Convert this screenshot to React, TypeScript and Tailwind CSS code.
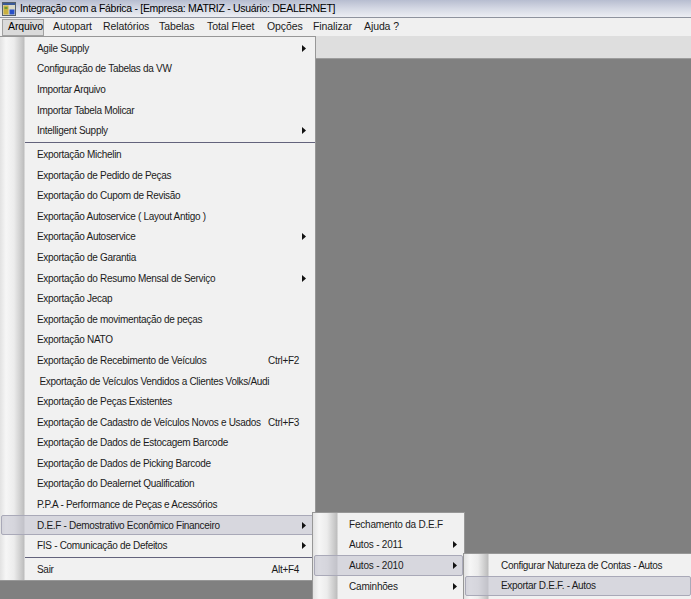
import React from 'react';

type Item = {
  label: string;
  shortcut?: string;
  sub?: boolean;
  active?: boolean;
  sep?: boolean;
};

const mainItems: Item[] = [
  { label: 'Agile Supply', sub: true },
  { label: 'Configuração de Tabelas da VW' },
  { label: 'Importar Arquivo' },
  { label: 'Importar Tabela Molicar' },
  { label: 'Intelligent Supply', sub: true },
  { label: '', sep: true },
  { label: 'Exportação Michelin' },
  { label: 'Exportação de Pedido de Peças' },
  { label: 'Exportação do Cupom de Revisão' },
  { label: 'Exportação Autoservice ( Layout Antigo )' },
  { label: 'Exportação Autoservice', sub: true },
  { label: 'Exportação de Garantia' },
  { label: 'Exportação do Resumo Mensal de Serviço', sub: true },
  { label: 'Exportação Jecap' },
  { label: 'Exportação de movimentação de peças' },
  { label: 'Exportação NATO' },
  { label: 'Exportação de Recebimento de Veículos', shortcut: 'Ctrl+F2' },
  { label: ' Exportação de Veículos Vendidos a Clientes Volks/Audi' },
  { label: 'Exportação de Peças Existentes' },
  { label: 'Exportação de Cadastro de Veículos Novos e Usados', shortcut: 'Ctrl+F3' },
  { label: 'Exportação de Dados de Estocagem Barcode' },
  { label: 'Exportação de Dados de Picking Barcode' },
  { label: 'Exportação do Dealernet Qualification' },
  { label: 'P.P.A - Performance de Peças e Acessórios' },
  { label: 'D.E.F - Demostrativo Econômico Financeiro', sub: true, active: true },
  { label: 'FIS - Comunicação de Defeitos', sub: true },
  { label: '', sep: true },
  { label: 'Sair', shortcut: 'Alt+F4' },
];

const defItems: Item[] = [
  { label: 'Fechamento da D.E.F' },
  { label: 'Autos - 2011', sub: true },
  { label: 'Autos - 2010', sub: true, active: true },
  { label: 'Caminhões', sub: true },
];

const autosItems: Item[] = [
  { label: 'Configurar Natureza de Contas - Autos' },
  { label: 'Exportar D.E.F. - Autos', active: true },
];

const topMenu = [
  { label: 'Arquivo', w: 'w-[42px]' },
  { label: 'Autopart', w: 'w-[50px]' },
  { label: 'Relatórios', w: 'w-[56px]' },
  { label: 'Tabelas', w: 'w-[48px]' },
  { label: 'Total Fleet', w: 'w-[60px]' },
  { label: 'Opções', w: 'w-[46px]' },
  { label: 'Finalizar', w: 'w-[51px]' },
  { label: 'Ajuda ?', w: 'w-[44px]' },
];

const Arrow = () => (
  <svg width="4" height="7" viewBox="0 0 4 7" className="shrink-0">
    <polygon points="0,0 4,3.5 0,7" fill="#111" />
  </svg>
);

const AppIcon = () => (
  <svg width="14" height="14" viewBox="0 0 14 14">
    <rect x="0.5" y="0.5" width="13" height="13" fill="#d8d8c8" stroke="#55606a" />
    <rect x="1" y="1" width="12" height="2" fill="#3a5a9a" />
    <rect x="1.5" y="3.5" width="5" height="9" fill="#c8b040" />
    <rect x="2.5" y="5" width="3" height="2" fill="#6a9a30" />
    <rect x="7.5" y="7.5" width="5" height="5" fill="#2850c8" />
  </svg>
);

const MenuRow = ({ item, textPad, rightPad }: { item: Item; textPad: string; rightPad: string }) => {
  if (item.sep) {
    return (
      <div className="h-[3.5px] flex items-center pl-[25px]">
        <div className="h-px w-full bg-[#63637c]" />
      </div>
    );
  }
  return (
    <div
      className={`h-[20.58px] flex items-center ${textPad} ${rightPad} whitespace-pre ${
        item.active ? 'bg-[#c6c6d2]/60 border border-[#a9a9b8] rounded-[2px] mx-[1px]' : 'border border-transparent mx-[1px]'
      }`}
    >
      <span className="flex-1">{item.label}</span>
      {item.shortcut && <span className="mr-[3px]">{item.shortcut}</span>}
      {item.sub ? <Arrow /> : <span className="w-[4px]" />}
    </div>
  );
};

const gutter =
  'bg-[linear-gradient(90deg,#e2e2e2_0px,#f6f6f6_6px,#ececec_14px,#c2c2c2_23px,#bcbcbc_24px,#f1f1f1_25px,#f1f1f1_100%)]';

export default function App() {
  return (
    <div className="relative w-[691px] h-[599px] overflow-hidden bg-[#808080] flex flex-col font-['Liberation_Sans',Arial,sans-serif] text-[#1b1b1b]">
      {/* title bar */}
      <div className="h-[18px] flex items-center gap-[4px] pl-[2px] border-b border-[#8e939e] bg-[linear-gradient(180deg,#b7bdd0_0%,#d4d8e4_50%,#eceef3_100%)] text-[10.5px] text-black tracking-[-0.3px] whitespace-nowrap">
        <AppIcon />
        <span>Integração com a Fábrica - [Empresa: MATRIZ - Usuário: DEALERNET]</span>
      </div>

      {/* menu bar */}
      <div className="h-[18px] flex items-center bg-[#f0f0f0] text-[10.5px] tracking-[-0.1px] whitespace-nowrap">
        {topMenu.map((m, i) => (
          <div
            key={m.label}
            className={`h-[17px] shrink-0 flex items-center pl-[5px] ${m.w} ${
              i === 0 ? 'ml-[2px] mr-[4px] bg-[#dadada] border border-[#a2a2a2] text-black' : ''
            }`}
          >
            {m.label}
          </div>
        ))}
      </div>

      {/* toolbar area */}
      <div className="h-[23px] bg-[#dedede] border-b border-[#9c9c9c]" />

      <div className="flex-1" />

      {/* Arquivo dropdown */}
      <div className={`absolute left-0 top-[36px] w-[316px] border border-[#979797] border-l-0 pt-px text-[10px] tracking-[-0.3px] ${gutter}`}>
        {mainItems.map((it, i) => (
          <MenuRow key={i} item={it} textPad="pl-[35px]" rightPad="pr-[7px]" />
        ))}
      </div>

      {/* D.E.F submenu */}
      <div className={`absolute left-[312px] top-[512px] w-[153px] h-[88px] border border-[#979797] pt-px text-[10px] tracking-[-0.2px] ${gutter}`}>
        {defItems.map((it, i) => (
          <MenuRow key={i} item={it} textPad="pl-[34px]" rightPad="pr-[5px]" />
        ))}
      </div>

      {/* Autos - 2010 submenu */}
      <div className={`absolute left-[463px] top-[553px] w-[230px] h-[48px] border border-[#979797] pt-px text-[10px] tracking-[-0.3px] ${gutter}`}>
        {autosItems.map((it, i) => (
          <MenuRow key={i} item={it} textPad="pl-[35px]" rightPad="pr-[5px]" />
        ))}
      </div>
    </div>
  );
}
